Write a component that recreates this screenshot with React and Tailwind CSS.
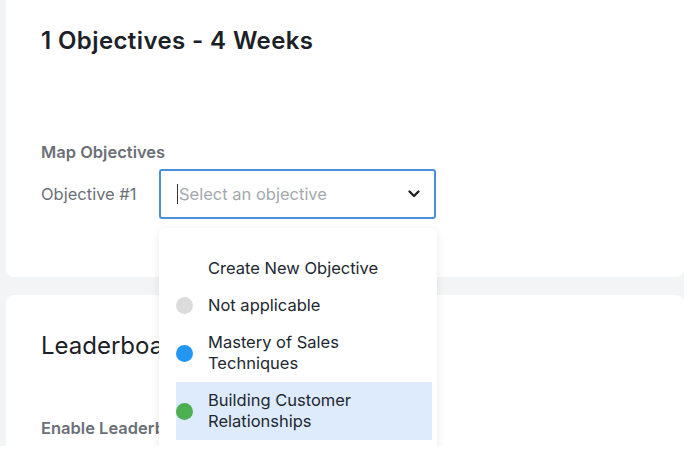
import React from 'react';

const options = [
  { label: 'Create New Objective', dot: null },
  { label: 'Not applicable', dot: 'bg-[#dcdcdc]' },
  { label: ['Mastery of Sales', 'Techniques'], dot: 'bg-[#2196f3]' },
  { label: ['Building Customer', 'Relationships'], dot: 'bg-[#4caf50]', active: true },
];

const Option = ({ label, dot, active }) => (
  <div className={`flex items-center py-2 ${active ? 'bg-[#deebfd]' : ''}`}>
    <span className={`w-[17px] h-[17px] rounded-full shrink-0 ${dot || ''}`}></span>
    <span className="ml-[15px] text-[16.5px] leading-[21px] text-[#222831]">
      {Array.isArray(label) ? (
        <>
          {label[0]}
          <br />
          {label[1]}
        </>
      ) : (
        label
      )}
    </span>
  </div>
);

export default function App() {
  return (
    <div
      className="w-[684px] h-[446px] overflow-hidden bg-[#f3f4f5] pl-[6px] flex flex-col gap-[18px]"
      style={{ fontFamily: 'Inter, "Noto Sans", sans-serif' }}
    >
      {/* Tarjeta de objetivos */}
      <div className="h-[277px] shrink-0 bg-white rounded-b-lg pl-[35px] pt-[26px]">
        <h1 className="text-[24px] leading-[30px] font-semibold text-[#1c2127] tracking-[0.4px]">
          1 Objectives - 4 Weeks
        </h1>

        <h2 className="mt-[84px] text-[16.5px] leading-[24px] font-semibold text-[#6b7078]">Map Objectives</h2>

        <div className="mt-[5px] flex items-center">
          <span className="w-[118px] text-[16.5px] text-[#6b7078]">Objective #1</span>
          <div className="relative">
            <div className="w-[277px] h-[50px] border-2 border-[#4a8fdc] rounded-[3px] flex items-center pl-[16px] pr-[13px]">
              <span className="w-px h-[20px] bg-[#333] mr-px"></span>
              <span className="flex-1 text-[16.5px] text-[#a4a8ae]">Select an objective</span>
              <svg width="14" height="14" viewBox="0 0 14 14" fill="none">
                <polyline points="2.5,4.5 7,9 11.5,4.5" stroke="#222" strokeWidth="2.4" strokeLinecap="round" strokeLinejoin="round" />
              </svg>
            </div>

            {/* Menú desplegable */}
            <div className="absolute left-0 top-[59px] z-10 w-[278px] h-[240px] bg-white rounded-md shadow-[0_2px_10px_rgba(0,0,0,0.09)] pt-[22px] pl-[17px] pr-[5px]">
              {options.map((o, i) => (
                <Option key={i} {...o} />
              ))}
            </div>
          </div>
        </div>
      </div>

      {/* Tarjeta de leaderboard */}
      <div className="flex-1 bg-white rounded-t-lg pl-[35px] pt-[35px]">
        <h2 className="text-[24px] leading-[32px] text-[#1c2127]">Leaderboard</h2>
        <p className="mt-[54px] text-[16.5px] leading-[24px] font-semibold text-[#6b7078]">Enable Leaderboard</p>
      </div>
    </div>
  );
}
